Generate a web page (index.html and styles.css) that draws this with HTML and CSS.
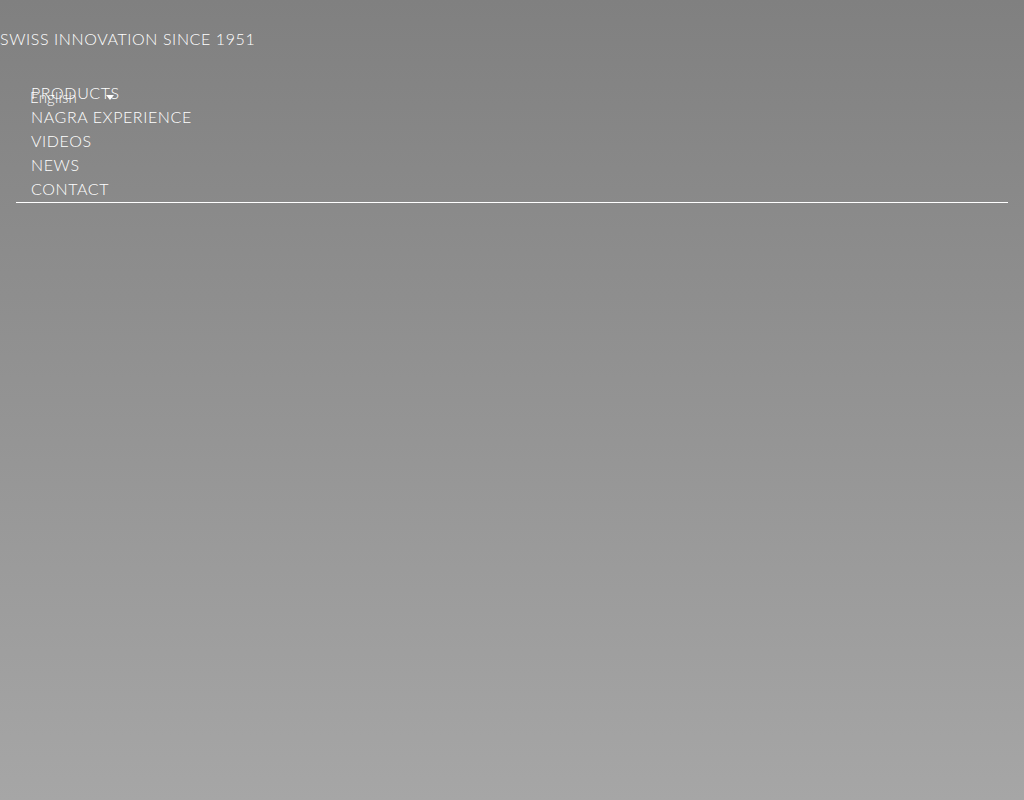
FILE: index.html
```html
<!DOCTYPE html>
<html lang="en">
  <head>
    <meta charset="UTF-8" />
    <meta name="viewport" content="width=device-width, initial-scale=1.0" />
    <title>Nagra</title>
    <link rel="stylesheet" href="styles.css">
  </head>
  <body>
    <header class="top">
      <p class="tagline">SWISS INNOVATION SINCE 1951</p>
    </header>

    <div class="menu">
      <div class="lang">
        <span>English</span>
        <span class="arrow"></span>
      </div>
      <ul class="nav">
        <li><a href="#">PRODUCTS</a></li>
        <li><a href="#">NAGRA EXPERIENCE</a></li>
        <li><a href="#">VIDEOS</a></li>
        <li><a href="#">NEWS</a></li>
        <li><a href="#">CONTACT</a></li>
      </ul>
    </div>
  </body>
</html>
```

FILE: styles.css
```css
html {
  height: 100%;
}
body {
  margin: 0;
  min-height: 100%;
  background: linear-gradient(#808080, #a6a6a6);
  font-family: "Lato", "Liberation Sans", sans-serif;
  font-weight: 300;
  color: #fff;
  letter-spacing: 0.6px;
}
.top {
  padding-top: 29px;
}
.tagline {
  margin: 0;
  font-size: 16px;
  line-height: 20px;
}
.menu {
  position: relative;
  margin: 0 16px;
  padding-top: 32px;
  border-bottom: 1px solid #fff;
}
.nav {
  list-style: none;
  margin: 0;
  padding: 0 0 1px 15px;
}
.nav li {
  line-height: 24px;
  font-size: 16px;
}
.nav a {
  color: #fff;
  text-decoration: none;
}
.lang {
  position: absolute;
  top: 40px;
  left: 14px;
  width: 76px;
  font-size: 15px;
  line-height: 16px;
  letter-spacing: 0.2px;
}
.arrow {
  position: absolute;
  right: -8px;
  top: 6px;
  border-left: 4px solid transparent;
  border-right: 4px solid transparent;
  border-top: 5px solid #fff;
}
```
